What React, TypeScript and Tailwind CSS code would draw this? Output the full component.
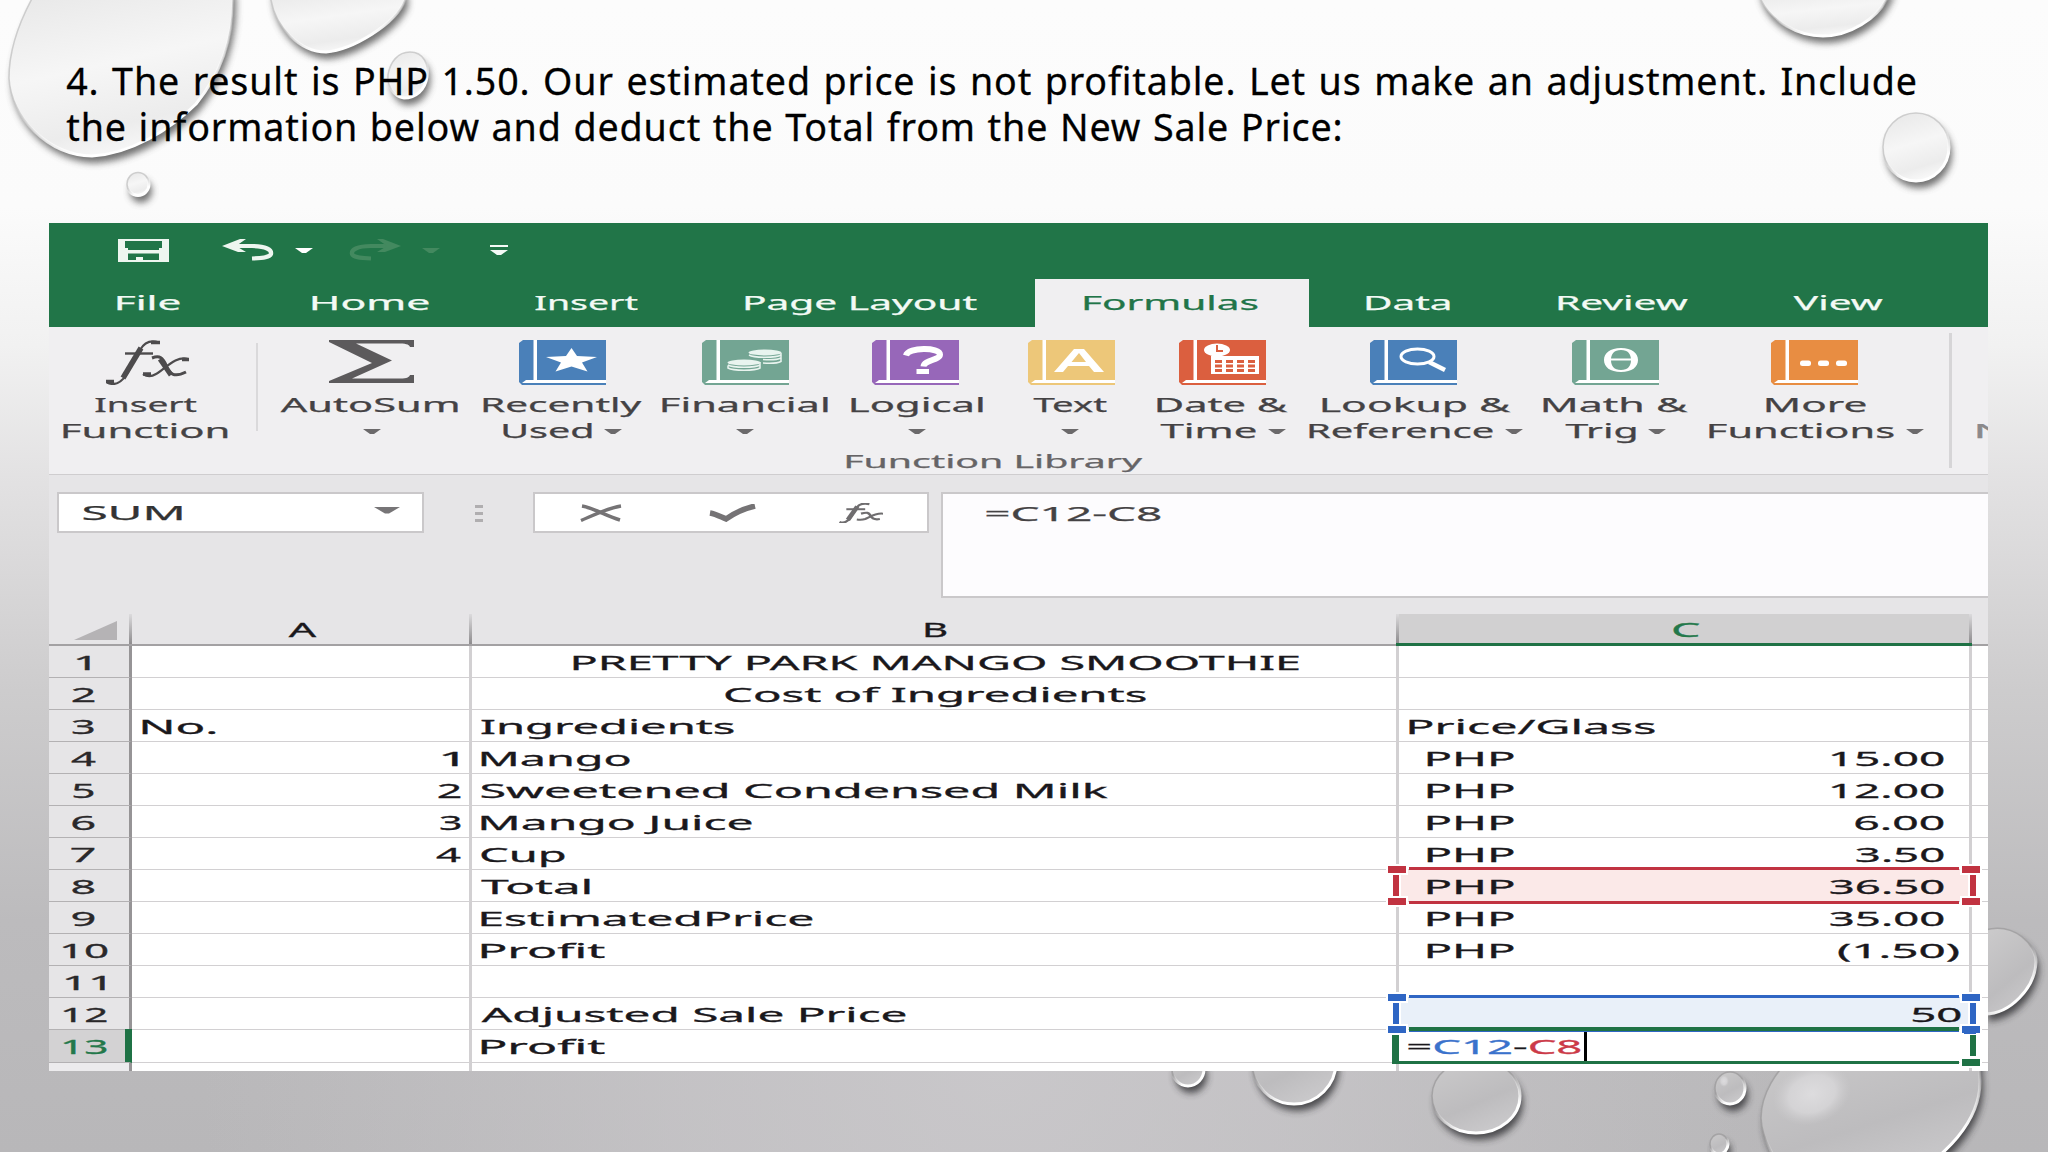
import React, { useLayoutEffect, useRef, useState } from "react";

/* Text whose visible ink, with its thin outline, spans `w` pixels horizontally. */
function Fit({ w, text, children, className = "", ls = 0, ws = 0 }: { w: number; text: string; children?: React.ReactNode; className?: string; ls?: number; ws?: number }) {
  const ref = useRef<HTMLSpanElement>(null);
  const [t, setT] = useState({ s: 1, x: 0 });
  useLayoutEffect(() => {
    const el = ref.current;
    const ctx = document.createElement("canvas").getContext("2d") as any;
    if (!el || !ctx) return;
    const cs = getComputedStyle(el);
    // Measured at ten times the size, so that rounding of the bounds does not matter.
    ctx.font = `${cs.fontStyle} ${cs.fontWeight} ${parseFloat(cs.fontSize) * 10}px ${cs.fontFamily}`;
    ctx.letterSpacing = `${ls * 10}px`;
    ctx.wordSpacing = `${ws * 10}px`;
    const m = ctx.measureText(text);
    const s = ((w - 1.6) * 10) / (m.actualBoundingBoxLeft + m.actualBoundingBoxRight);
    setT({ s, x: 0.8 + (m.actualBoundingBoxLeft * s) / 10 });
  }, [w, text, ls, ws]);
  return (
    <span className={`inline-block whitespace-nowrap ${className}`} style={{ width: w }}>
      <span
        ref={ref}
        className="inline-block origin-left whitespace-nowrap"
        style={{ transform: `translateX(${t.x}px) scaleX(${t.s})`, letterSpacing: ls, wordSpacing: `${ws}px` }}
      >
        {children ?? text}
      </span>
    </span>
  );
}

function Drop({ d, light }: { d: string; light?: boolean }) {
  return (
    <g>
      <path d={d} transform="translate(3 7)" fill={light ? "#4f4f4f" : "#2f2e30"} opacity="0.8" filter="url(#soft)" />
      <path d={d} fill={light ? "url(#dropLight)" : "url(#dropDark)"} />
      <path d={d} fill="none" stroke={light ? "#c4c4c4" : "#9d9c9e"} strokeWidth="1.5" opacity="0.8" />
      <path d={d} fill="none" stroke="url(#rim)" strokeWidth="3" />
    </g>
  );
}

const oval = (cx: number, cy: number, rx: number, ry: number) =>
  `M${cx - rx} ${cy}a${rx} ${ry} 0 1 0 ${2 * rx} 0a${rx} ${ry} 0 1 0 ${-2 * rx} 0z`;

function Backdrop() {
  return (
    <svg className="absolute inset-0" width="2048" height="1152" viewBox="0 0 2048 1152">
      <defs>
        <linearGradient id="bg" x1="0" y1="0" x2="0" y2="1">
          <stop offset="0" stopColor="#fcfcfc" />
          <stop offset="0.18" stopColor="#fbfbfb" />
          <stop offset="0.3" stopColor="#f1f1f1" />
          <stop offset="0.42" stopColor="#e2e1e2" />
          <stop offset="0.6" stopColor="#cdcccd" />
          <stop offset="0.8" stopColor="#bcbbbd" />
          <stop offset="1" stopColor="#b8b7b9" />
        </linearGradient>
        <radialGradient id="glow" gradientUnits="userSpaceOnUse" cx="1000" cy="1070" r="800">
          <stop offset="0" stopColor="#cecccf" stopOpacity="0.75" />
          <stop offset="0.4" stopColor="#cbc9cc" stopOpacity="0.6" />
          <stop offset="1" stopColor="#c8c6c9" stopOpacity="0" />
        </radialGradient>
        <linearGradient id="dropLight" x1="0.3" y1="0" x2="0.6" y2="1">
          <stop offset="0" stopColor="#e9e9e9" />
          <stop offset="0.45" stopColor="#f6f6f6" />
          <stop offset="0.8" stopColor="#ececec" />
          <stop offset="1" stopColor="#fafafa" />
        </linearGradient>
        <linearGradient id="dropDark" x1="0.2" y1="0" x2="0.7" y2="1">
          <stop offset="0" stopColor="#cac9ca" />
          <stop offset="0.6" stopColor="#bdbcbe" />
          <stop offset="1" stopColor="#cbcacc" />
        </linearGradient>
        <linearGradient id="rim" x1="0.2" y1="0" x2="0.75" y2="1">
          <stop offset="0.45" stopColor="#fff" stopOpacity="0" />
          <stop offset="0.8" stopColor="#fff" stopOpacity="1" />
        </linearGradient>
        <radialGradient id="shine">
          <stop offset="0" stopColor="#dddcde" />
          <stop offset="0.6" stopColor="#d6d5d7" stopOpacity="0.9" />
          <stop offset="1" stopColor="#cccbcd" stopOpacity="0" />
        </radialGradient>
        <filter id="soft" x="-30%" y="-30%" width="160%" height="160%">
          <feGaussianBlur stdDeviation="3.5" />
        </filter>
      </defs>
      <rect width="2048" height="1152" fill="url(#bg)" />
      <rect y="700" width="2048" height="452" fill="url(#glow)" />
      <Drop light d="M38 -12C22 15 9 45 9 78C11 118 48 155 92 156C130 154 170 130 196 104C222 72 233 35 233 0L233 -12Z" />
      <Drop light d="M270 -12L271 0C276 28 300 52 326 52C352 50 396 24 405 0L405 -12Z" />
      <Drop light d="M410 52C424 52 429 65 427 77C425 90 416 98 404 98C394 97 387 86 388 75C390 62 398 52 410 52Z" />
      <Drop light d={oval(138, 184, 11, 11.5)} />
      <Drop light d="M1757 -12L1761 0C1772 22 1798 36 1823 36C1850 36 1877 18 1886 0L1892 -12Z" />
      <Drop light d={oval(1916, 147, 33, 34)} />
      <Drop d="M1985 930C2015 922 2036 945 2036 962C2035 988 2010 1014 1985 1014Z" />
      <Drop d={oval(1476, 1096, 44, 37)} />
      <Drop d={oval(1730, 1088, 15, 16)} />
      <Drop d={oval(1719, 1144, 9, 10)} />
      <Drop d="M1800 1050C1775 1070 1761 1095 1761 1118C1762 1140 1775 1160 1790 1180L1900 1180C1945 1160 1981 1120 1980 1080L1978 1040Z" />
      <ellipse cx="1812" cy="1094" rx="40" ry="30" fill="url(#shine)" transform="rotate(-20 1812 1094)" />
      <ellipse cx="1724" cy="1081" rx="5" ry="6" fill="url(#shine)" />
      <Drop d={oval(1188, 1069, 16, 17)} />
      <Drop d={oval(1294, 1062, 42, 42)} />
    </svg>
  );
}

const Caret = ({ className = "" }: { className?: string }) => (
  <svg className={className} width="18" height="6" viewBox="0 0 18 6">
    <path d="M0 0H18L11 5H7Z" fill="currentColor" />
  </svg>
);

function QuickAccess() {
  return (
    <div className="flex h-14 items-start pl-[69px] pt-4 text-white">
      <svg className="h-[23px] w-[51px]" viewBox="0 0 51 23" fill="#eef6f0">
        <path fillRule="evenodd" d="M0 0H51V23H0ZM7 2V9H10V11H41V9H44V2ZM10 14.500V21H18V18H25V21H41V14.500Z" />
      </svg>
      <svg className="ml-[53px] h-[22px] w-[52px]" viewBox="0 0 52 22" fill="none" stroke="#eef6f0">
        <path d="M8 7H30C44 7 50 11 49 15C48 18 42 19 30 19.5" strokeWidth="4.2" />
        <path d="M0 7L18 0H24L14 7L24 13H16Z" fill="#eef6f0" stroke="none" />
      </svg>
      <Caret className="ml-[21px] mt-[9px]" />
      <svg className="ml-9 h-[22px] w-[52px] -scale-x-100" viewBox="0 0 52 22" fill="none" stroke="#43895f">
        <path d="M8 7H30C44 7 50 11 49 15C48 18 42 19 30 19.5" strokeWidth="4.2" />
        <path d="M0 7L18 0H24L14 7L24 13H16Z" fill="#43895f" stroke="none" />
      </svg>
      <Caret className="ml-[21px] mt-[9px] text-[#43895f]" />
      <svg className="ml-[50px] mt-[6px] h-[10px] w-[18px]" viewBox="0 0 18 10" fill="#f4faf6">
        <path d="M0 0H18V2H0ZM0 5H18L11 10H7Z" />
      </svg>
    </div>
  );
}

const tabs: { t: string; ml: number; w: number }[] = [
  { t: "File", ml: 68, w: 63 },
  { t: "Home", ml: 132, w: 117 },
  { t: "Insert", ml: 106, w: 103 },
  { t: "Page Layout", ml: 107, w: 232 },
];
const tabsRight: { t: string; ml: number; w: number }[] = [
  { t: "Data", ml: 57, w: 84 },
  { t: "Review", ml: 108, w: 130 },
  { t: "View", ml: 105, w: 90 },
];

function Tab({ t, ml, w }: { t: string; ml: number; w: number }) {
  return (
    <span className="text-[#f3faf5]" style={{ marginLeft: ml }}>
      <Fit text={t} w={w} />
    </span>
  );
}

function Book({ fill, children }: { fill: string; children: React.ReactNode }) {
  return (
    <svg className="h-[45px] w-[87px]" viewBox="0 0 87 45">
      <path d="M4 0H87V45H3L0 42V3Z" fill={fill} />
      <path d="M14.5 0H18V40H14.5Z" fill="#fff" />
      <path d="M7 40H87V43H3Z" fill="#fff" />
      {children}
    </svg>
  );
}

const icons: Record<string, React.ReactNode> = {
  fx: (
    <svg className="h-[45px] w-[84px]" viewBox="0 0 84 45" fill="none" stroke="#4d4b4d">
      <path d="M1 42.5C8 46 15 43 21 34L34 10C38 3 44 -0.5 53 2.5" strokeWidth="2.2" />
      <path d="M17 38L35 8" strokeWidth="5.5" />
      <path d="M19 13.5H47" strokeWidth="2.4" />
      <path d="M0 41.5H8M45 2.5H54" strokeWidth="3.4" />
      <path d="M46 18C54 15 57 18 60 25C63 34 68 38 80 32" strokeWidth="3" />
      <path d="M54 19L65 35" strokeWidth="5" />
      <path d="M82 19C70 15 58 30 50 34C45 37 40 36 37 34" strokeWidth="2.2" />
      <path d="M76 19.5H83M37 34H45" strokeWidth="3.6" />
    </svg>
  ),
  sum: (
    <svg className="h-[43px] w-[86px]" viewBox="0 0 86 43" fill="#5c5a5c">
      <path d="M1 0H86V7H82C81 4 77 3.5 70 3.5H28L64 20.5L24 38.5H70C77 38.5 81 38 82 35H86V43H1V41L44 23L1 2Z" />
    </svg>
  ),
  star: (
    <Book fill="#4a80b9">
      <path d="M52.500 8L58 16L78 17L63 22.500L68.500 31.500L52.500 26.500L36.500 31.500L42 22.500L27 17L47 16Z" fill="#fff" />
    </Book>
  ),
  coins: (
    <Book fill="#73a593">
      <g fill="#e9f4ef">
        <ellipse cx="63" cy="12.500" rx="16.500" ry="3" />
        <ellipse cx="42" cy="22.500" rx="16.500" ry="3" />
      </g>
      <g fill="none" stroke="#e9f4ef" strokeWidth="1.500">
        <path d="M47 15C52 18 74 18 79 15M61 19.500C68 20 76 19.500 79 18M61 23C68 23.500 76 23 79 21.500" />
        <path d="M26 25C31 28 53 28 58 25M26 25.500V28C31 31 53 31 58 28V25M79 13V22M58 22V28" />
      </g>
    </Book>
  ),
  question: (
    <Book fill="#9767b9">
      <path d="M34 15.500C36 7 68 7 68 14.500C68 20 52 20 51.500 26.500" fill="none" stroke="#fff" strokeWidth="6" />
      <path d="M44.500 29H57V34H44.500Z" fill="#fff" />
    </Book>
  ),
  letter: (
    <Book fill="#edc779">
      <path fillRule="evenodd" d="M26 32L46 9H56L76 32H66L61 26H40L35 32ZM43.500 22H58L51 13Z" fill="#fff" />
    </Book>
  ),
  date: (
    <Book fill="#db5f3f">
      <ellipse cx="38" cy="10" rx="13" ry="6.500" fill="#fff" />
      <path d="M38 5V11H44" fill="none" stroke="#db5f3f" strokeWidth="2" />
      <path d="M32 16H80V34H32Z" fill="#fff" />
      <path d="M36 20H43V23H36ZM47 20H54V23H47ZM58 20H65V23H58ZM69 20H76V23H69ZM36 24.500H43V27.500H36ZM47 24.500H54V27.500H47ZM58 24.500H65V27.500H58ZM69 24.500H76V27.500H69ZM36 29H43V32H36ZM47 29H54V32H47ZM58 29H65V32H58ZM69 29H76V32H69Z" fill="#db5f3f" />
    </Book>
  ),
  lookup: (
    <Book fill="#4a80b9">
      <ellipse cx="47.500" cy="16.500" rx="16.500" ry="7.500" fill="none" stroke="#fff" strokeWidth="3" />
      <path d="M59 22L75 30" stroke="#fff" strokeWidth="4.500" />
    </Book>
  ),
  theta: (
    <Book fill="#73a593">
      <path fillRule="evenodd" d="M49 8C60 8 66 13 66 20C66 27 60 32 49 32C38 32 32 27 32 20C32 13 38 8 49 8ZM49 10C42 10 39 14 39 20C39 26 42 30 49 30C56 30 59 26 59 20C59 14 56 10 49 10Z" fill="#fff" />
      <path d="M38 19.500H60" stroke="#fff" strokeWidth="2" />
    </Book>
  ),
  more: (
    <Book fill="#e88d42">
      <g fill="#fff">
        <rect x="29" y="20.500" width="11" height="5.500" rx="2.500" />
        <rect x="47" y="20.500" width="11" height="5.500" rx="2.500" />
        <rect x="65" y="20.500" width="11" height="5.500" rx="2.500" />
      </g>
    </Book>
  ),
};

const groups: { icon: string; a: string; aw: number; b?: string; bw?: number; caret?: boolean; w: number; shift?: number }[] = [
  { icon: "sum", a: "AutoSum", aw: 178, caret: true, w: 196, shift: 2 },
  { icon: "star", a: "Recently", aw: 159, b: "Used", bw: 89, caret: true, w: 190, shift: 0 },
  { icon: "coins", a: "Financial", aw: 166, caret: true, w: 176, shift: 0 },
  { icon: "question", a: "Logical", aw: 132, caret: true, w: 168, shift: -2 },
  { icon: "letter", a: "Text", aw: 74, caret: true, w: 138, shift: 1 },
  { icon: "date", a: "Date &", aw: 131, b: "Time", bw: 96, caret: true, w: 167, shift: 0 },
  { icon: "lookup", a: "Lookup &", aw: 189, b: "Reference", bw: 184, caret: true, w: 220, shift: -3 },
  { icon: "theta", a: "Math &", aw: 145, b: "Trig", bw: 71, caret: true, w: 179, shift: 0 },
  { icon: "more", a: "More", aw: 100, b: "Functions", bw: 185, caret: true, w: 222, shift: -2 },
];

function Group({ g }: { g: (typeof groups)[number] }) {
  return (
    <div className="flex shrink-0 flex-col items-center text-[#444244]" style={{ width: g.w }}>
      <div className="flex h-[52px]" style={{ marginLeft: (g.shift ?? 0) * 2 }}>{icons[g.icon]}</div>
      <div className="h-[26px] leading-[26px]"><Fit text={g.a} w={g.aw} /></div>
      <div className={`flex h-[26px] items-center gap-3 leading-[26px] ${g.icon === "sum" ? "pl-[6px]" : ""}`}>
        {g.b && <Fit text={g.b} w={g.bw ?? 0} />}
        {g.caret && <Caret className="mt-[1px] text-[#6b696b]" />}
      </div>
    </div>
  );
}

function Ribbon() {
  return (
    <div className="flex h-[148px] overflow-hidden border-b border-[#cfcdcf] bg-[#f0eff1]">
      <div className="w-[1900px] shrink-0">
        <div className="flex h-[122px] pt-[13px]">
          <Group g={{ icon: "fx", a: "Insert", aw: 102, b: "Function", bw: 165, w: 193, shift: 2 }} />
          <div className="ml-[14px] mr-[13px] mt-[3px] h-[88px] w-[2px] bg-[#dad9db]" />
          {groups.map((g) => <Group key={g.icon} g={g} />)}
        </div>
        <div className="pl-[797px] text-[18.5px] leading-6 text-[#666466]"><Fit text="Function Library" w={297} /></div>
      </div>
      <div className="mt-[6px] h-[135px] w-[3px] shrink-0 bg-[#d6d5d7]" />
      <div className="ml-[25px] mt-[91px] h-[26px] leading-[26px] text-[#8b898b]"><Fit text="N" w={30} /></div>
    </div>
  );
}

function FormulaBar() {
  return (
    <div className="flex h-[139px] items-start bg-[#e6e5e7] pl-2 pt-[17px]">
      <div className="flex h-[41px] w-[367px] items-center border-2 border-[#cac8ca] bg-white pl-[24px] leading-[37px] text-[#333]">
        <Fit text="SUM" w={99} />
        <svg className="-mt-1 ml-[192px] h-[7px] w-[26px]" viewBox="0 0 26 7"><path d="M0 0H26L15 6.500H11Z" fill="#777577" /></svg>
      </div>
      <div className="ml-[51px] mt-[13px] flex w-2 flex-col gap-[4px]">
        <i className="h-[3px] bg-[#b0aeb0]" /><i className="h-[3px] bg-[#b0aeb0]" /><i className="h-[3px] bg-[#b0aeb0]" />
      </div>
      <div className="ml-[50px] flex h-[41px] w-[396px] border-2 border-[#cac8ca] bg-white pl-[45px] pt-[10px]">
        <svg className="h-[18px] w-[42px]" viewBox="0 0 42 18" fill="none" stroke="#757375">
          <path d="M2 2C14 4 24 11 40 16" strokeWidth="3.600" /><path d="M41 2C28 4 14 11 1 16.500" strokeWidth="3.400" />
        </svg>
        <svg className="ml-[87px] h-[18px] w-[47px]" viewBox="0 0 47 18" fill="none" stroke="#757375">
          <path d="M1 9C7 10 12 13 17 15C24 10 33 5 46 2" strokeWidth="5.500" />
        </svg>
        <svg className="-mt-[1px] ml-[83px] h-[20px] w-[44px]" viewBox="0 0 84 45" preserveAspectRatio="none" fill="none" stroke="#6f6d6f">
          <path d="M1 42.500C8 46 15 43 21 34L34 10C38 3 44 -0.500 58 2.500" strokeWidth="5" />
          <path d="M17 38L35 8" strokeWidth="9" /><path d="M14 14H50" strokeWidth="4.500" />
          <path d="M42 24C54 20 57 22 60 28C63 36 68 38 78 36" strokeWidth="5" />
          <path d="M84 24C70 22 58 32 50 36C45 38 40 38 34 37" strokeWidth="4.500" />
        </svg>
      </div>
      <div className="ml-[12px] h-[106px] flex-1 border-2 border-r-0 border-[#cac8ca] bg-[#fdfcfe] pl-[43px] pt-[1px] leading-[37px] text-[#444244]">
        <Fit text="=C12-C8" w={175} />
      </div>
    </div>
  );
}

type Row = { n: string; nw: number; a?: string; aw?: number; b?: string; bw?: number; c?: string; cw?: number };
const rows: Row[] = [
  { n: "1", nw: 14, b: "PRETTY PARK MANGO SMOOTHIE", bw: 726 },
  { n: "2", nw: 23, b: "Cost of Ingredients", bw: 421 },
  { n: "3", nw: 22, a: "No.", aw: 74, b: "Ingredients", bw: 253 },
  { n: "4", nw: 25, a: "1", aw: 16, b: "Mango", bw: 149, c: "15.00", cw: 113 },
  { n: "5", nw: 21, a: "2", aw: 23, b: "Sweetened Condensed Milk", bw: 627, c: "12.00", cw: 113 },
  { n: "6", nw: 23, a: "3", aw: 21, b: "Mango Juice", bw: 271, c: "6.00", cw: 89 },
  { n: "7", nw: 24, a: "4", aw: 25, b: "Cup", bw: 84, c: "3.50", cw: 88 },
  { n: "8", nw: 23, b: "Total", bw: 109, c: "36.50", cw: 114 },
  { n: "9", nw: 23, b: "EstimatedPrice", bw: 332, c: "35.00", cw: 114 },
  { n: "10", nw: 46, b: "Profit", bw: 124, c: "(1.50)", cw: 121 },
  { n: "11", nw: 40 },
  { n: "12", nw: 44, b: "Adjusted Sale Price", bw: 425 },
  { n: "13", nw: 44, b: "Profit", bw: 124 },
];

function SheetRow({ r, i }: { r: Row; i: number }) {
  const active = r.n === "13";
  return (
    <div className="flex h-[32.08px] leading-[33px]">
      <div className={`flex w-[83px] shrink-0 justify-center border-b border-r-[3px] border-b-[#b3b1b3] ${r.n.length > 1 ? "pr-[8px]" : "pr-[12px]"} ${active ? "border-r-[#1f7245] bg-[#d3d2d3] text-[#23784a]" : "border-r-[#969496] bg-[#e6e5e7] text-[#2a282a]"}`}>
        <Fit text={r.n} w={r.nw} />
      </div>
      <div className={`flex w-[339.5px] shrink-0 border-b border-r-[3px] border-[#d2d0d2] pl-[10px] ${r.a === "1" ? "pr-[11px]" : "pr-[8px]"} ${i === 2 ? "" : "justify-end"}`}>
        {r.a && <Fit text={r.a} w={r.aw ?? 0} />}
      </div>
      <div className={`flex w-[927.5px] shrink-0 border-b border-r-[3px] border-[#d2d0d2] ${i < 2 ? "justify-center pl-[4px]" : "pl-[9.5px]"}`}>
        {r.b && <Fit text={r.b} w={r.bw ?? 0} />}
      </div>
      <div className={`flex w-[573px] shrink-0 border-b border-r-[3px] border-[#d2d0d2] ${r.n === "8" ? "bg-[#fbe9e8]" : r.n === "12" ? "bg-[#e9f0f9]" : ""}`}>
        {i === 2 && <div className="pl-[10px]"><Fit text="Price/Glass" w={246} /></div>}
        {r.c && (
          <div className={`flex w-full justify-between pl-[28px] ${r.n === "10" ? "pr-[10px]" : "pr-[25px]"}`}>
            <Fit text="PHP" w={87} />
            <Fit text={r.c} w={r.cw ?? 0} />
          </div>
        )}
        {r.n === "12" && <div className="flex w-full justify-end pr-[8px]"><Fit text="50" w={49} /></div>}
        {active && (
          <div className="flex pl-[9px]">
            <Fit text="=C12-C8" w={173}>
              =<span className="text-[#3a72cc]">C12</span>-<span className="text-[#cc3a48]">C8</span>
            </Fit>
            <i className="ml-[3px] h-[31px] w-[3px] bg-black" />
          </div>
        )}
      </div>
      <div className="flex-1 border-b border-[#d2d0d2]" />
    </div>
  );
}

/* Range marker drawn over a cell in column C. */
function Range({ className, color }: { className: string; color: string }) {
  return (
    <div className={`absolute left-[1339px] h-[39px] w-[592px] ${className}`}>
      <i className={`absolute left-[21px] right-[21px] top-[1px] h-[3px] ${color}`} />
      <i className={`absolute left-[21px] right-[21px] top-[35px] h-[3px] ${color}`} />
      <i className={`absolute left-[5px] top-[9px] h-[21px] w-[6px] outline-2 outline-white ${color}`} />
      <i className={`absolute right-[4px] top-[9px] h-[21px] w-[6px] outline-2 outline-white ${color}`} />
      <i className={`absolute left-0 top-0 h-[7px] w-[18px] outline-2 outline-white ${color}`} />
      <i className={`absolute right-0 top-0 h-[7px] w-[18px] outline-2 outline-white ${color}`} />
      <i className={`absolute bottom-0 left-0 h-[7px] w-[18px] outline-2 outline-white ${color}`} />
      <i className={`absolute bottom-0 right-0 h-[7px] w-[18px] outline-2 outline-white ${color}`} />
    </div>
  );
}

const HeadLine = () => <i className="h-full w-[3px] shrink-0 bg-linear-to-b from-[#dcdbdd] to-[#8f8d8f]" />;

function Sheet() {
  return (
    <div className="relative h-[457px] overflow-hidden bg-white text-[20.5px] text-[#1a181c] [-webkit-text-stroke:0.3px]">
      <div className="flex h-[31.5px] border-b-2 border-[#a3a1a3] bg-[#e6e5e7] leading-[30px]">
        <div className="flex w-[80px] shrink-0 justify-end pr-[12px] pt-[7px]">
          <svg className="h-5 w-[43px]" viewBox="0 0 43 20"><path d="M43 0V19H0Z" fill="#b5b3b5" /></svg>
        </div>
        <HeadLine />
        <div className="flex w-[336.5px] justify-center pl-[4px]"><Fit text="A" w={29} /></div>
        <HeadLine />
        <div className="flex w-[924.5px] justify-center pl-[4px]"><Fit text="B" w={22} /></div>
        <div className="-mb-[2px] flex h-[31.5px] w-[576px] border-b-[3px] border-[#1f7245] bg-[#d1d0d1]">
          <HeadLine />
          <div className="flex flex-1 justify-center pl-[4px] text-[#23784a]"><Fit text="C" w={27} /></div>
          <HeadLine />
        </div>
      </div>
      {rows.map((r, i) => <SheetRow key={r.n} r={r} i={i} />)}
      <div className="flex h-3">
        <div className="w-[83px] shrink-0 border-r-[3px] border-[#969496] bg-[#ecebed]" />
        <div className="w-[339.5px] shrink-0 border-r-[3px] border-[#d2d0d2]" />
        <div className="w-[927.5px] shrink-0 border-r-[3px] border-[#d2d0d2]" />
        <div className="w-[573px] shrink-0 border-r-[3px] border-[#d2d0d2]" />
      </div>
      <i className="absolute left-[76px] top-[415px] h-[33px] w-[7px] bg-[#1f7245]" />
      <Range className="top-[252px]" color="bg-[#c13341]" />
      <Range className="top-[380px]" color="bg-[#2f66c4]" />
      <div className="absolute left-[1343px] top-[413px] h-[39px] w-[589px]">
        <i className="absolute left-[17px] right-[22px] top-0 h-[4px] bg-[#1f7245]" />
        <i className="absolute left-0 top-[8px] h-[29px] w-[7px] bg-[#1f7245]" />
        <i className="absolute bottom-[2px] left-0 right-[22px] h-[3px] bg-[#1f7245]" />
        <i className="absolute right-[5px] top-[8px] h-[21px] w-[6px] bg-[#1f7245] outline-2 outline-white" />
        <i className="absolute bottom-0 right-[1px] h-[7px] w-[18px] bg-[#1f7245] outline-2 outline-white" />
        <i className="absolute right-[5px] top-[4px] h-[3px] w-[12px] bg-[#2f66c4]" />
      </div>
    </div>
  );
}

export default function App() {
  return (
    <main className="relative h-[1152px] w-[2048px] overflow-hidden font-['Noto_Sans',sans-serif]">
      <Backdrop />
      <div className="relative flex h-full flex-col">
        <h1 className="h-[223px] pl-[66px] pt-[57px] text-[39px] leading-[46px] text-black [-webkit-text-stroke:0.3px]">
          <Fit className="block" w={1850} ls={0.9} ws={2} text="4. The result is PHP 1.50. Our estimated price is not profitable. Let us make an adjustment. Include" />
          <Fit className="block" w={1275} ls={0.9} ws={1} text="the information below and deduct the Total from the New Sale Price:" />
        </h1>
        <section className="ml-[49px] h-[848px] w-[1939px] overflow-hidden text-[20px] [-webkit-text-stroke:0.25px]">
          <header className="h-[104px] bg-[#217548]">
            <QuickAccess />
            <nav className="flex h-12 leading-[48px]">
              {tabs.map((t) => <Tab key={t.t} {...t} />)}
              <div className="ml-[58px] w-[274px] bg-[#f0eff1] pl-[49px] text-[#217548]"><Fit text="Formulas" w={174} /></div>
              {tabsRight.map((t) => <Tab key={t.t} {...t} />)}
            </nav>
          </header>
          <Ribbon />
          <FormulaBar />
          <Sheet />
        </section>
      </div>
    </main>
  );
}
